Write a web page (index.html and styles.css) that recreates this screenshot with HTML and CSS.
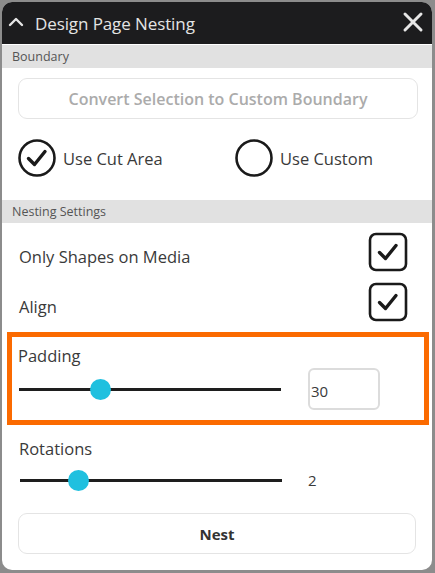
FILE: index.html
```html
<!DOCTYPE html>
<html>
<head>
<meta charset="utf-8">
<link rel="stylesheet" href="styles.css">
</head>
<body>
<div class="panel">
  <div class="titlebar">
    <svg class="chev" width="16" height="12" viewBox="0 0 16 12"><path d="M2 9 L8 3 L14 9" fill="none" stroke="#e6e6e6" stroke-width="2.4" stroke-linecap="round" stroke-linejoin="round"/></svg>
    <span class="title">Design Page Nesting</span>
    <svg class="close" width="22" height="22" viewBox="0 0 22 22"><path d="M3 3 L19 19 M19 3 L3 19" stroke="#e6e6e6" stroke-width="3" stroke-linecap="round"/></svg>
  </div>

  <div class="section-head">Boundary</div>
  <div class="section">
    <div class="btn btn-disabled">Convert Selection to Custom Boundary</div>
    <div class="radios">
      <div class="radio">
        <svg width="40" height="40" viewBox="0 0 40 40"><circle cx="20" cy="20" r="17.5" fill="none" stroke="#1a1a1a" stroke-width="2.6"/><path d="M11.5 20.5 L17.5 26.5 L28 13.5" fill="none" stroke="#1a1a1a" stroke-width="3.4" stroke-linecap="round" stroke-linejoin="round"/></svg>
        <span>Use Cut Area</span>
      </div>
      <div class="radio">
        <svg width="40" height="40" viewBox="0 0 40 40"><circle cx="20" cy="20" r="17.5" fill="none" stroke="#1a1a1a" stroke-width="2.6"/></svg>
        <span>Use Custom</span>
      </div>
    </div>
  </div>

  <div class="section-head">Nesting Settings</div>
  <div class="section settings">
    <div class="check-row">
      <span class="check-label">Only Shapes on Media</span>
      <svg width="40" height="40" viewBox="0 0 40 40"><rect x="2" y="2" width="36" height="36" rx="6" fill="none" stroke="#1a1a1a" stroke-width="2.6"/><path d="M11.5 20.5 L17.5 26.5 L28 13.5" fill="none" stroke="#1a1a1a" stroke-width="3.4" stroke-linecap="round" stroke-linejoin="round"/></svg>
    </div>
    <div class="check-row">
      <span class="check-label">Align</span>
      <svg width="40" height="40" viewBox="0 0 40 40"><rect x="2" y="2" width="36" height="36" rx="6" fill="none" stroke="#1a1a1a" stroke-width="2.6"/><path d="M11.5 20.5 L17.5 26.5 L28 13.5" fill="none" stroke="#1a1a1a" stroke-width="3.4" stroke-linecap="round" stroke-linejoin="round"/></svg>
    </div>

    <div class="highlight">
      <div class="label">Padding</div>
      <div class="slider-row">
        <div class="slider"><div class="thumb" style="left: 31%"></div></div>
        <div class="num-input">30</div>
      </div>
    </div>

    <div class="plain-block">
      <div class="label">Rotations</div>
      <div class="slider-row">
        <div class="slider"><div class="thumb" style="left: 22%"></div></div>
        <div class="num-plain">2</div>
      </div>
    </div>

    <div class="btn btn-nest">Nest</div>
  </div>
</div>
</body>
</html>
```

FILE: styles.css
```css
* { box-sizing: border-box; }
html, body { margin: 0; padding: 0; }
body {
  background: #8c8c8c;
  width: 435px;
  height: 573px;
  padding: 2px 3px 3px 2px;
  font-family: "Open Sans", "Noto Sans", sans-serif;
  color: #3a3a3a;
}
.panel {
  width: 430px;
  height: 568px;
  background: #ffffff;
  border-radius: 10px;
  overflow: hidden;
  display: flex;
  flex-direction: column;
}
.titlebar {
  height: 42px;
  flex: none;
  background: #1c1c1e;
  display: flex;
  align-items: center;
  padding: 0 8px 0 6px;
}
.chev { margin-right: 11px; margin-top: -2px; }
.title {
  color: #e4e4e4;
  font-size: 17px;
  flex: 1;
  letter-spacing: -0.1px;
}
.close { margin-top: -2px; }
.section-head {
  height: 23px;
  flex: none;
  background: #e1e1e1;
  font-size: 12.5px;
  color: #555;
  padding-left: 10px;
  line-height: 23px;
  margin-top: 1px;
}
.section { padding: 10px 14px 0 16px; }
.btn {
  height: 41px;
  border: 1.5px solid #e4e4e4;
  border-radius: 9px;
  display: flex;
  align-items: center;
  justify-content: center;
  font-size: 15px;
  font-weight: 600;
}
.btn-disabled { color: #ababab; font-size: 16px; padding-top: 1px; }
.radios {
  display: flex;
  align-items: center;
  height: 40px;
  margin-top: 19px;
  margin-bottom: 21px;
}
.radio {
  flex: none;
  display: flex;
  align-items: center;
  font-size: 16.5px;
  gap: 6px;
  width: 218px;
  margin-left: -1px;
}
.settings { padding-top: 9px; padding-left: 16px; padding-right: 24px; }
.check-row {
  display: flex;
  align-items: center;
  justify-content: space-between;
  height: 40px;
  margin-bottom: 10px;
  font-size: 16.5px;
  padding-left: 1px;
}
.check-label { padding-top: 9px; }
.highlight {
  border: 5.5px solid #fb6a00;
  margin: 0 -21px 0 -11px;
  padding: 7px 0 8px 6px;
  height: 93px;
}
.label { font-size: 16.5px; padding-left: 0; }
.slider-row {
  display: flex;
  align-items: center;
  height: 44px;
}
.slider {
  position: relative;
  width: 262px;
  height: 3px;
  background: #1e1e1e;
  margin-left: 1px;
}
.thumb {
  position: absolute;
  top: -9px;
  width: 21px;
  height: 21px;
  border-radius: 50%;
  background: #1fc0df;
  margin-left: -10px;
}
.num-input {
  margin-left: 27px;
  width: 72px;
  height: 42px;
  border: 2px solid #dcdcdc;
  border-radius: 6px;
  font-size: 15px;
  display: flex;
  align-items: center;
  padding-left: 1px;
  padding-top: 4px;
}
.plain-block { padding: 12px 0 0 1px; }
.plain-block .slider-row { height: 40px; margin-top: 0; }
.num-plain { margin-left: 26px; font-size: 15px; }
.btn-nest {
  margin-top: 13px;
  margin-right: -8px;
  color: #333;
  font-size: 15px;
  font-weight: 700;
}
```
